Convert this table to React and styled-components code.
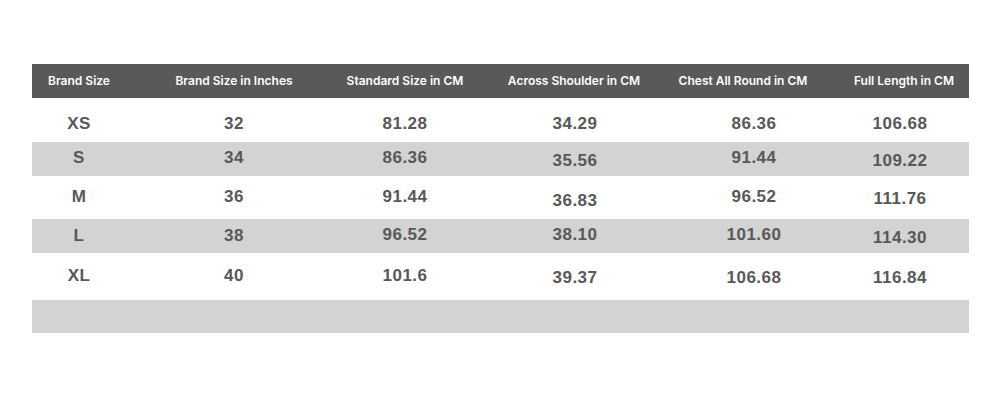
import React from "react";
import styled, { createGlobalStyle } from "styled-components";

const GlobalStyle = createGlobalStyle`
  html, body { margin: 0; padding: 0; background: #ffffff; }
  body { width: 1000px; height: 400px; overflow: hidden; }
`;

const Page = styled.div`
  width: 1000px;
  height: 400px;
  box-sizing: border-box;
  padding: 64px 31px 0 32px;
  background: #ffffff;
`;

const Table = styled.div`
  display: flex;
  flex-direction: column;
  width: 937px;
`;

const COLS = "94px 216px 126px 212px 126px 1fr";

const HeaderRow = styled.div`
  display: grid;
  grid-template-columns: ${COLS};
  height: 34px;
  align-items: center;
  background: #595959;
`;

const HeadCell = styled.div`
  display: flex;
  justify-content: center;
  padding-left: ${(p) => p.$pl || 0}px;
  padding-right: ${(p) => p.$pr || 0}px;
  font-family: Inter, "Open Sans", sans-serif;
  font-weight: 600;
  font-size: 12px;
  line-height: 1;
  color: #ffffff;
  white-space: nowrap;
`;

const Row = styled.div`
  display: grid;
  grid-template-columns: ${COLS};
  height: ${(p) => p.$h}px;
  align-items: center;
  background: ${(p) => (p.$shade ? "#d3d3d3" : "#ffffff")};
`;

const Cell = styled.div`
  display: flex;
  justify-content: center;
  padding-left: ${(p) => p.$pl || 0}px;
  padding-right: ${(p) => p.$pr || 0}px;
  margin-top: ${(p) => (p.$dy || 0) * 2}px;
  font-family: "Liberation Sans", Arial, sans-serif;
  font-weight: 700;
  font-size: 17px;
  letter-spacing: 0.5px;
  line-height: 1;
  color: #585858;
  white-space: nowrap;
`;

const headers = [
  { t: "Brand Size" },
  { t: "Brand Size in Inches" },
  { t: "Standard Size in CM" },
  { t: "Across Shoulder in CM" },
  { t: "Chest All Round in CM" },
  { t: "Full Length in CM", pl: 33 },
];

/* horizontal padding per column for the data cells */
const colPad = [
  { pl: 0 },
  { pl: 0 },
  { pl: 0 },
  { pl: 2 },
  { pl: 22 },
  { pl: 25 },
];

const rows = [
  { h: 44, shade: false, dy: 3, cells: ["XS", "32", "81.28", "34.29", "86.36", "106.68"], d: [] },
  { h: 34, shade: true, dy: -1.5, cells: ["S", "34", "86.36", "35.56", "91.44", "109.22"], d: [0, 0, 0, 3, 0, 3] },
  { h: 43, shade: false, dy: -1.5, cells: ["M", "36", "91.44", "36.83", "96.52", "111.76"], d: [0, 0, 0, 4, 0, 2.5] },
  { h: 34, shade: true, dy: -1, cells: ["L", "38", "96.52", "38.10", "101.60", "114.30"], d: [0, 0, -1, -1, -1, 2] },
  { h: 47, shade: false, dy: -1.5, cells: ["XL", "40", "101.6", "39.37", "106.68", "116.84"], d: [0, 0, 0, 2, 2, 2] },
];

export default function App() {
  return (
    <>
      <GlobalStyle />
      <Page>
        <Table>
          <HeaderRow>
            {headers.map((h) => (
              <HeadCell key={h.t} $pl={h.pl} $pr={h.pr}>
                {h.t}
              </HeadCell>
            ))}
          </HeaderRow>
          {rows.map((r, ri) => (
            <Row key={ri} $h={r.h} $shade={r.shade}>
              {r.cells.map((c, ci) => (
                <Cell
                  key={ci}
                  $pl={colPad[ci].pl}
                  $pr={colPad[ci].pr}
                  $dy={r.dy + (r.d[ci] || 0)}
                >
                  {c}
                </Cell>
              ))}
            </Row>
          ))}
          <Row $h={33} $shade />
        </Table>
      </Page>
    </>
  );
}
